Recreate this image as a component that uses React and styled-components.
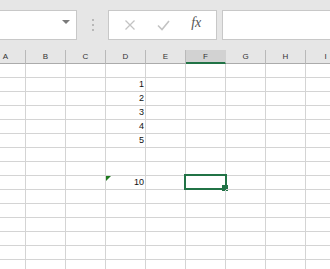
import styled, {createGlobalStyle} from 'styled-components'

const Global=createGlobalStyle`
body{margin:0;overflow:hidden;background:#fff;font-family:"Liberation Sans",Arial,sans-serif;}
`
const COLS=['A','B','C','D','E','F','G','H','I']
const ROWS=15
const data={'2-D':'1','3-D':'2','4-D':'3','5-D':'4','6-D':'5','9-D':'10'}

const Page=styled.div`
width:330px;
height:269px;
overflow:hidden;
`
const Toolbar=styled.div`
height:50px;
background:#e6e6e6;
display:flex;
align-items:flex-start;
padding-top:10px;
box-sizing:border-box;
`
const NameBox=styled.div`
width:77px;
height:30px;
box-sizing:border-box;
background:#fff;
border:1px solid #c8c8c8;
border-left:none;
display:flex;
align-items:center;
justify-content:flex-end;
padding-right:6px;
`
const Arrow=styled.div`
width:0;height:0;
border-left:4px solid transparent;
border-right:4px solid transparent;
border-top:4px solid #7a7a7a;
margin-top:-6px;
`
const Grip=styled.div`
width:31px;
height:30px;
display:flex;
flex-direction:column;
align-items:center;
justify-content:center;
gap:3px;
span{width:2px;height:2px;background:#b8b8b8;}
`
const FxBox=styled.div`
width:109px;
height:30px;
box-sizing:border-box;
background:#fff;
border:1px solid #c8c8c8;
display:flex;
align-items:center;
justify-content:space-around;
padding:0 4px;
`
const Fx=styled.span`
font-family:"Liberation Serif",serif;
font-style:italic;
font-size:14px;
color:#555;
margin-top:-4px;
`
const FormulaInput=styled.div`
flex:1;
margin-left:5px;
height:30px;
box-sizing:border-box;
background:#fff;
border:1px solid #c8c8c8;
border-right:none;
`
const Sheet=styled.div`
margin-left:-14px;
`
const Row=styled.div`
display:flex;
height:14px;
`
const HeadCell=styled.div`
width:40px;
flex:none;
box-sizing:border-box;
height:14px;
background:${p=>p.$active?'#d2d2d2':'#e6e6e6'};
border-right:1px solid ${p=>p.$active?'#d2d2d2':'#b9b9b9'};
border-bottom:${p=>p.$active?'2px solid #217346':'1px solid #ababab'};
font-size:8px;
color:#333;
display:flex;
align-items:center;
justify-content:center;
`
const Cell=styled.div`
width:40px;
flex:none;
box-sizing:border-box;
height:14px;
border-right:1px solid #d4d4d4;
border-bottom:1px solid #d4d4d4;
position:relative;
font-size:9px;
color:#111;
text-align:right;
padding-right:1px;
line-height:13px;
`
const Flag=styled.div`
position:absolute;
left:0;top:0;
width:0;height:0;
border-top:5px solid #1e7a1e;
border-right:5px solid transparent;
`
const Selection=styled.div`
position:absolute;
left:-2px;top:-2px;right:-2px;bottom:-1px;
border:2px solid #217346;
pointer-events:none;
`
const Handle=styled.div`
position:absolute;
right:-4px;bottom:-4px;
width:6px;height:6px;
background:#217346;
border:1px solid #fff;
border-top:none;border-left:none;
`

const XIcon=()=>(
  <svg width="12" height="12" viewBox="0 0 12 12"><path d="M1.5 1.5l9 9M10.5 1.5l-9 9" stroke="#c3c3c3" strokeWidth="1.3" fill="none"/></svg>
)
const CheckIcon=()=>(
  <svg width="13" height="11" viewBox="0 0 13 11"><path d="M1 5.5l4 4 7-8.5" stroke="#c3c3c3" strokeWidth="1.6" fill="none"/></svg>
)

const App=()=>{
  const rows=Array.from({length:ROWS},(_,i)=>i+1)
  return(
    <Page>
      <Global/>
      <Toolbar>
        <NameBox><Arrow/></NameBox>
        <Grip><span/><span/><span/></Grip>
        <FxBox><XIcon/><CheckIcon/><Fx>fx</Fx></FxBox>
        <FormulaInput/>
      </Toolbar>
      <Sheet>
        <Row>
          {COLS.map(c=><HeadCell key={c} $active={c==='F'}>{c}</HeadCell>)}
        </Row>
        {rows.map(r=>(
          <Row key={r}>
            {COLS.map(c=>(
              <Cell key={c}>
                {r===9&&c==='D'&&<Flag/>}
                {data[`${r}-${c}`]}
                {r===9&&c==='F'&&<Selection><Handle/></Selection>}
              </Cell>
            ))}
          </Row>
        ))}
      </Sheet>
    </Page>
  )
}
export default App
